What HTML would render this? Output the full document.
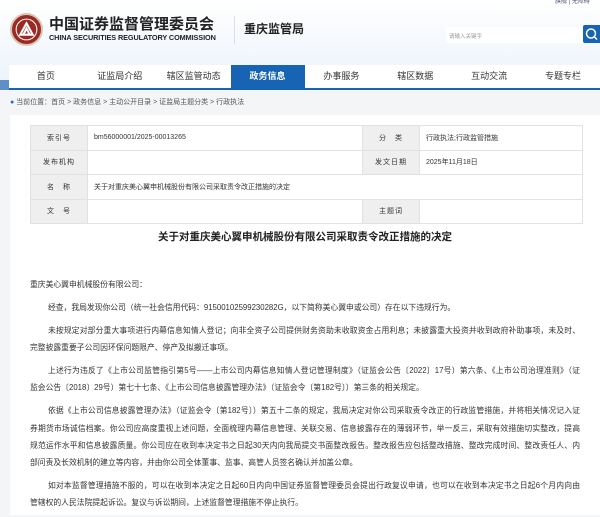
<!DOCTYPE html>
<html><head><meta charset="utf-8"><style>
*{margin:0;padding:0;box-sizing:border-box}
body{width:600px;height:513px;overflow:hidden;background:#f4f5f6;font-family:"Liberation Sans","Noto Sans CJK SC",sans-serif;color:#333;position:relative}
.hdr{position:absolute;left:0;top:0;width:600px;height:90px;background:linear-gradient(#fff,#eaf2fb)}
.logo{position:absolute;left:10px;top:13px;width:33px;height:33px;border-radius:50%;background:#9c2a24;border:2px solid #d9c7b5}
.t1{position:absolute;left:49px;top:15px;font-size:15px;line-height:17px;font-weight:bold;color:#222;white-space:nowrap;font-family:"Noto Sans CJK SC",sans-serif}
.t2{position:absolute;left:49px;top:33px;font-size:7.3px;font-weight:bold;color:#222;white-space:nowrap;letter-spacing:-0.1px}
.sep{position:absolute;left:234px;top:16px;width:1px;height:28px;background:#dde}
.t3{position:absolute;left:244px;top:22px;font-size:12px;line-height:14px;font-weight:bold;color:#222;font-family:"Noto Sans CJK SC",sans-serif}
.top{position:absolute;left:555px;top:-4px;font-size:6px;color:#557}
.srch{position:absolute;left:446px;top:27px;width:137px;height:16px;background:#fff;font-size:5.5px;color:#999;padding:5px 3px}
.sbtn{position:absolute;left:583px;top:25px;width:17px;height:18px;background:#1763b4;border-radius:2px 0 0 2px}
.nav{position:absolute;left:9px;top:65px;width:591px;height:25px;background:#fff;border-bottom:2px solid #1763b4;display:flex}
.nav div{flex:1;text-align:center;font-size:9px;line-height:23px;color:#333}
.nav .on{background:#1763b4;color:#fff;font-weight:bold}
.lb{position:absolute;left:0;top:80px;width:9px;height:10px;background:#5f8fc4}
.crumb{position:absolute;left:10px;top:97px;font-size:7px;color:#555}
.main{position:absolute;left:10px;top:115px;width:590px;height:400px;background:#fff}
table{position:absolute;left:30px;top:125px;width:553px;border-collapse:collapse;font-size:7px}
td{border:1px solid #e2e2e2;height:24.5px;padding:0 6px}
td.l{background:#efefef;text-align:center;width:57px;color:#333;letter-spacing:1px}
h1{position:absolute;left:0;width:610px;top:229px;text-align:center;font-size:10.5px;font-weight:bold;color:#222}
.txt{position:absolute;left:30px;top:276px;width:550px;font-size:7.8px;line-height:17.2px;color:#333}
.txt p{margin-bottom:5.8px}
.txt span{display:block;white-space:nowrap;text-align:justify;text-align-last:justify}
.txt span.e{text-align-last:left}
.txt .i{padding-left:2.3em}
</style></head><body>
<div class="hdr"></div>
<div class="top">旗舰 | 无障碍</div>
<div class="logo"><svg width="29" height="29" viewBox="0 0 28 28"><circle cx="14" cy="14" r="10" fill="none" stroke="#fff" stroke-width="1"/><path d="M8 19L14 8L20 19Z M11 19L14 13L17 19" fill="none" stroke="#fff" stroke-width="2"/></svg></div>
<div class="t1">中国证券监督管理委员会</div>
<div class="t2">CHINA SECURITIES REGULATORY COMMISSION</div>
<div class="sep"></div>
<div class="t3">重庆监管局</div>
<div class="srch">请输入关键字</div>
<div class="sbtn"><svg width="17" height="18"><circle cx="8" cy="8.5" r="4.5" fill="none" stroke="#fff" stroke-width="1.5"/><path d="M11 11.5l3 3" stroke="#fff" stroke-width="1.5"/></svg></div>
<div class="lb"></div>
<div class="nav"><div>首页</div><div>证监局介绍</div><div>辖区监管动态</div><div class="on">政务信息</div><div>办事服务</div><div>辖区数据</div><div>互动交流</div><div>专题专栏</div></div>
<div class="crumb"><span style="color:#2a6fbf">●</span> 当前位置：首页 &gt; 政务信息 &gt; 主动公开目录 &gt; 证监局主题分类 &gt; 行政执法</div>
<div class="main"></div>
<table>
<tr><td class="l">索引号</td><td style="width:275px">bm56000001/2025-00013265</td><td class="l" style="width:54px">分　类</td><td>行政执法;行政监管措施</td></tr>
<tr><td class="l">发布机构</td><td></td><td class="l">发文日期</td><td>2025年11月18日</td></tr>
<tr><td class="l">名　称</td><td colspan="3">关于对重庆美心翼申机械股份有限公司采取责令改正措施的决定</td></tr>
<tr><td class="l">文　号</td><td></td><td class="l">主题词</td><td></td></tr>
</table>
<h1>关于对重庆美心翼申机械股份有限公司采取责令改正措施的决定</h1>
<div class="txt">
<p><span class="e">重庆美心翼申机械股份有限公司：</span></p>
<p><span class="e i">经查，我局发现你公司（统一社会信用代码：91500102599230282G，以下简称美心翼申或公司）存在以下违规行为。</span></p>
<p><span class="i">未按规定对部分重大事项进行内幕信息知情人登记；向非全资子公司提供财务资助未收取资金占用利息；未披露重大投资并收到政府补助事项，未及时、</span><span class="e">完整披露重要子公司因环保问题限产、停产及拟搬迁事项。</span></p>
<p><span class="i">上述行为违反了《上市公司监管指引第5号——上市公司内幕信息知情人登记管理制度》（证监会公告〔2022〕17号）第六条、《上市公司治理准则》（证</span><span class="e">监会公告〔2018〕29号）第七十七条、《上市公司信息披露管理办法》（证监会令〔第182号〕）第三条的相关规定。</span></p>
<p><span class="i">依据《上市公司信息披露管理办法》（证监会令〔第182号〕）第五十二条的规定，我局决定对你公司采取责令改正的行政监管措施，并将相关情况记入证</span><span>券期货市场诚信档案。你公司应高度重视上述问题，全面梳理内幕信息管理、关联交易、信息披露存在的薄弱环节，举一反三，采取有效措施切实整改，提高</span><span>规范运作水平和信息披露质量。你公司应在收到本决定书之日起30天内向我局提交书面整改报告。整改报告应包括整改措施、整改完成时间、整改责任人、内</span><span class="e">部问责及长效机制的建立等内容，并由你公司全体董事、监事、高管人员签名确认并加盖公章。</span></p>
<p><span class="i">如对本监督管理措施不服的，可以在收到本决定之日起60日内向中国证券监督管理委员会提出行政复议申请，也可以在收到本决定书之日起6个月内向由</span><span class="e">管辖权的人民法院提起诉讼。复议与诉讼期间，上述监督管理措施不停止执行。</span></p>
</div>
</body></html>
